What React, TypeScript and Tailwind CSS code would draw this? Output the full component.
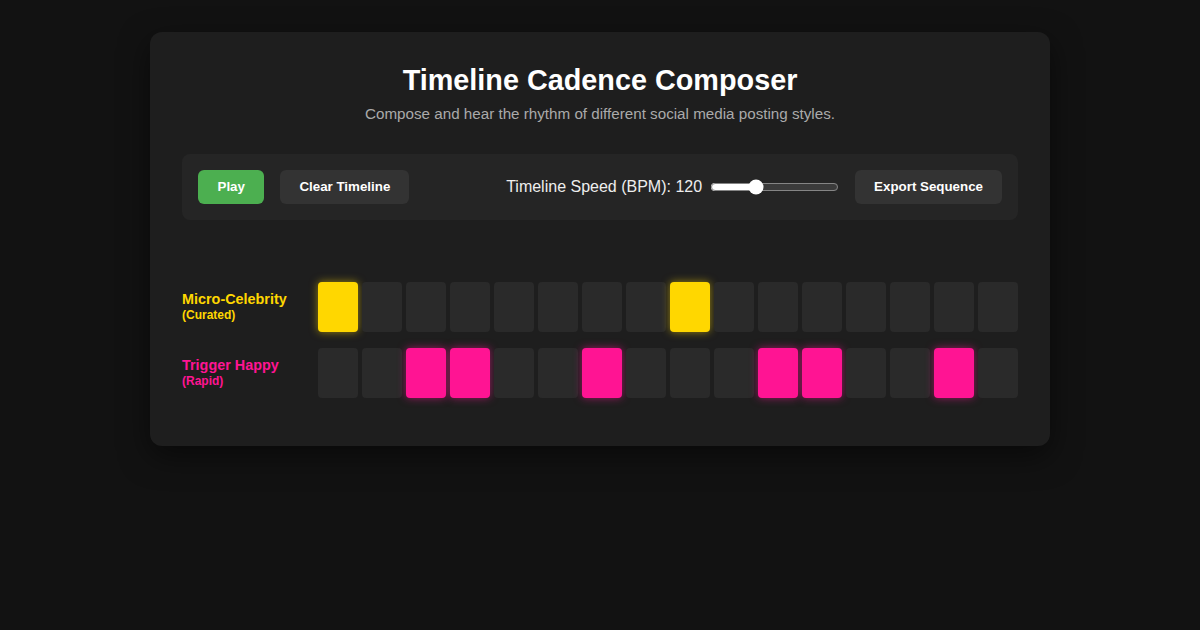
import React, { useState } from "react";

type Track = {
  name: string;
  style: string;
  text: string;
  on: string;
  steps: number[];
};

const tracks: Track[] = [
  {
    name: "Micro-Celebrity",
    style: "(Curated)",
    text: "text-[#ffd700]",
    on: "bg-[#ffd700] shadow-[0_0_8px_rgba(255,215,0,0.55)]",
    steps: [1, 0, 0, 0, 0, 0, 0, 0, 1, 0, 0, 0, 0, 0, 0, 0],
  },
  {
    name: "Trigger Happy",
    style: "(Rapid)",
    text: "text-[#ff1493]",
    on: "bg-[#ff1493] shadow-[0_0_8px_rgba(255,20,147,0.55)]",
    steps: [0, 0, 1, 1, 0, 0, 1, 0, 0, 0, 1, 1, 0, 0, 1, 0],
  },
];

export default function App() {
  const [bpm, setBpm] = useState(120);

  return (
    <div
      className="min-h-[630px] w-full bg-[#121212] pt-[32px]"
      style={{ fontFamily: '"Liberation Sans", Arial, sans-serif' }}
    >
      <div className="mx-auto w-[900px] rounded-[12px] bg-[#1e1e1e] p-[32px] shadow-[0_10px_30px_rgba(0,0,0,0.5)]">
        <h1 className="text-center text-[28.8px] font-bold leading-[33px] text-white">
          Timeline Cadence Composer
        </h1>
        <p className="mt-[8px] text-center text-[15.2px] leading-[17px] text-[#aaaaaa]">
          Compose and hear the rhythm of different social media posting styles.
        </p>

        <div className="mt-[32px] flex items-center gap-[16px] rounded-[8px] bg-[#252525] p-[16px]">
          <button className="h-[34px] rounded-[6px] bg-[#4caf50] px-[19.5px] text-[13.33px] font-bold text-white">
            Play
          </button>
          <button className="h-[34px] rounded-[6px] bg-[#333333] px-[19px] text-[13.33px] font-bold text-white">
            Clear Timeline
          </button>
          <div className="ml-auto flex items-center gap-[6px] text-[16px] text-[#eeeeee]">
            <span>Timeline Speed (BPM): {bpm}</span>
            <input
              type="range"
              min={60}
              max={240}
              value={bpm}
              onChange={(e) => setBpm(Number(e.target.value))}
              className="my-[2px] ml-[2px] mr-0 w-[129px] [color-scheme:dark] accent-white"
            />
          </div>
          <button className="h-[34px] rounded-[6px] bg-[#333333] px-[19px] text-[13.33px] font-bold text-white">
            Export Sequence
          </button>
        </div>

        <div className="mb-[16px] mt-[62px] flex flex-col gap-[16px]">
          {tracks.map((t) => (
            <div key={t.name} className="flex items-center">
              <div className={`w-[136px] font-bold ${t.text}`}>
                <div className="text-[14.4px] leading-[17px]">{t.name}</div>
                <div className="text-[12px] leading-[15px]">{t.style}</div>
              </div>
              <div className="flex gap-[4px]">
                {t.steps.map((s, i) => (
                  <div
                    key={i}
                    className={`h-[50px] w-[40px] rounded-[4px] ${s ? t.on : "bg-[#2a2a2a]"}`}
                  />
                ))}
              </div>
            </div>
          ))}
        </div>
      </div>
    </div>
  );
}
